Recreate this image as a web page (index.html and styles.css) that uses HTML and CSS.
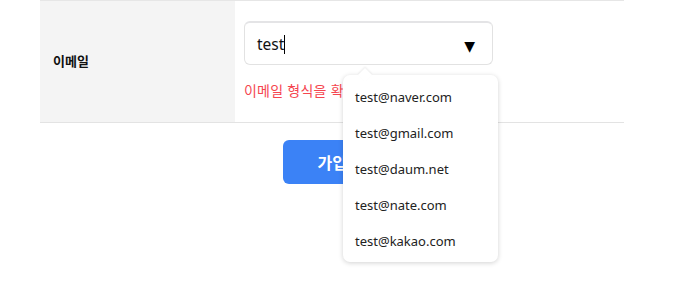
FILE: index.html
```html
<!DOCTYPE html>
<html lang="ko">
<head>
<meta charset="utf-8">
<link rel="stylesheet" href="styles.css">
</head>
<body>
<div class="form">
  <div class="row">
    <div class="label">이메일</div>
    <div class="field">
      <div class="input-wrap">
        <div class="input"><span class="val">test</span><span class="caret"></span></div>
        <span class="arrow">▼</span>
      </div>
      <div class="error">이메일 형식을 확인해주세요.</div>
    </div>
  </div>
  <div class="actions">
    <button class="submit">가입하기</button>
  </div>
</div>
<ul class="dropdown">
  <li>test@naver.com</li>
  <li>test@gmail.com</li>
  <li>test@daum.net</li>
  <li>test@nate.com</li>
  <li>test@kakao.com</li>
</ul>
</body>
</html>
```
FILE: styles.css
```css
html, body {
  margin: 0;
  padding: 0;
  background: #fff;
  font-family: "Noto Sans", "Noto Sans CJK KR", sans-serif;
  color: #111;
}
.form {
  width: 584px;
  margin-left: 40px;
}
.row {
  display: flex;
  border-top: 1px solid #e6e6e6;
  border-bottom: 1px solid #e3e3e3;
  height: 121px;
}
.label {
  width: 195px;
  background: #f4f4f4;
  padding-left: 13px;
  box-sizing: border-box;
  display: flex;
  align-items: center;
  font-family: "Noto Sans CJK KR", sans-serif;
  font-weight: 700;
  font-size: 13px;
  padding-bottom: 2px;
}
.field {
  padding: 20px 0 0 9px;
}
.input-wrap {
  width: 249px;
  height: 44px;
  box-sizing: border-box;
  border: 1px solid #e2e2e2;
  border-top: 2px solid #e4e4e6;
  border-radius: 6px;
  display: flex;
  align-items: center;
  justify-content: space-between;
  padding: 0 17px 0 12px;
}
.input {
  display: flex;
  align-items: center;
  font-size: 15.5px;
  color: #111;
  padding-top: 1px;
}
.caret {
  display: inline-block;
  width: 1px;
  height: 19px;
  background: #000;
  margin-left: 0;
}
.arrow {
  font-size: 14px;
  color: #000;
  padding-top: 4px;
  font-family: "DejaVu Sans", sans-serif;
}
.error {
  margin-top: 15px;
  font-family: "Noto Sans CJK KR", sans-serif;
  font-size: 14px;
  color: #f5454f;
  letter-spacing: 0.2px;
}
.actions {
  padding: 17px 0 0 243px;
}
.submit {
  width: 128px;
  height: 44px;
  border: none;
  border-radius: 6px;
  background: #3b82f6;
  color: #fff;
  font-family: "Noto Sans CJK KR", sans-serif;
  font-weight: 700;
  font-size: 16px;
  padding: 0;
}
.dropdown {
  position: absolute;
  left: 343px;
  top: 75px;
  width: 155px;
  height: 187px;
  box-sizing: border-box;
  margin: 0;
  padding: 4px 0 0 12px;
  list-style: none;
  background: #fff;
  border-radius: 7px;
  box-shadow: 0 1px 5px rgba(0,0,0,0.18);
}
.dropdown::before {
  content: "";
  position: absolute;
  left: 17px;
  top: -5px;
  width: 10px;
  height: 10px;
  background: #fff;
  transform: rotate(45deg);
  box-shadow: -1px -1px 2px rgba(0,0,0,0.07);
}
.dropdown li {
  height: 36px;
  line-height: 36px;
  font-size: 13px;
  color: #222;
  position: relative;
}
```
